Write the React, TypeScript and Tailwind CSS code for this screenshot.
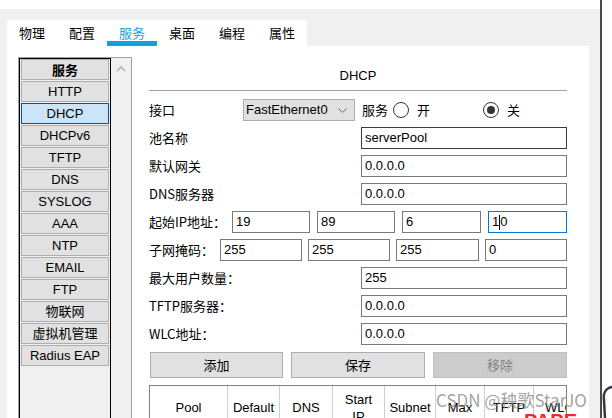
import React from "react";

const sans = "font-['Liberation_Sans','Noto_Sans_CJK_SC',sans-serif]";
const cjk = "font-['Noto_Sans_CJK_SC','Liberation_Sans',sans-serif]";

const tabs = ["物理", "配置", "服务", "桌面", "编程", "属性"];

const services = [
  "HTTP",
  "DHCP",
  "DHCPv6",
  "TFTP",
  "DNS",
  "SYSLOG",
  "AAA",
  "NTP",
  "EMAIL",
  "FTP",
  "物联网",
  "虚拟机管理",
  "Radius EAP",
];

const columns = [
  { w: "w-[78px]", lines: ["Pool", "Name"] },
  { w: "w-[52px]", lines: ["Default", "Gateway"] },
  { w: "w-[53px]", lines: ["DNS", "Server"] },
  { w: "w-[52px]", lines: ["Start", "IP", "Address"] },
  { w: "w-[51px]", lines: ["Subnet", "Mask"] },
  { w: "w-[49px]", lines: ["Max", "User"] },
  { w: "w-[49px]", lines: ["TFTP", "Server"] },
  { w: "w-[52px]", lines: ["WLC", "Address"] },
];

const Input = ({ value, w, dark }: { value: string; w: string; dark?: boolean }) => (
  <div
    className={`${w} h-[22px] shrink-0 border ${dark ? "border-[#3c3c3c]" : "border-[#7a7a7a]"} bg-white px-[3px] text-[13px] leading-[20px] text-black ${sans}`}
  >
    {value}
  </div>
);

const Row = ({ label, labelW, children }: { label: string; labelW: string; children: React.ReactNode }) => (
  <div className="mt-[6px] flex h-[22px] items-center">
    <div className={`${labelW} shrink-0 text-[13px] leading-[22px] text-black ${cjk}`}>{label}</div>
    {children}
  </div>
);

const Radio = ({ on }: { on?: boolean }) => (
  <div className="flex h-[16px] w-[16px] items-center justify-center rounded-full border border-[#333333] bg-white">
    {on && <div className="h-[8px] w-[8px] rounded-full bg-[#333333]" />}
  </div>
);

export default function App() {
  return (
    <div className="relative flex h-[418px] w-[612px] overflow-hidden bg-white">
      <div className="flex h-full w-[600px] shrink-0 flex-col">
        <div className="h-[9px] shrink-0 bg-white" />
        <div className="shrink-0 bg-[#f0f0f0] pl-[7px] pr-[11px] pt-[11px]">
          {/* tab strip */}
          <div className="flex h-[26px] w-[300px] bg-white">
            {tabs.map((t, i) => (
              <div
                key={t}
                className={`flex w-[50px] items-center justify-center text-[13px] ${cjk} ${
                  i === 2 ? "text-[#1a9ed8] shadow-[inset_0_-5px_0_#12a0da]" : "text-black"
                }`}
              >
                {t}
              </div>
            ))}
          </div>

          {/* panel */}
          <div className="flex h-[400px] items-start bg-white">
            {/* service list */}
            <div className="ml-[11px] mt-[11px] flex h-[370px] w-[114px] border border-[#a0a0a0] bg-[#f0f0f0]">
              <div className="flex h-full w-[92px] flex-col gap-[1px] border border-black px-[1px]">
                <div className={`flex h-[21px] items-center justify-center border border-[#adadad] bg-[#e1e1e1] text-[13px] font-bold text-black ${cjk}`}>
                  服务
                </div>
                {services.map((s) => (
                  <div
                    key={s}
                    className={`flex h-[21px] items-center justify-center border text-[13px] leading-[19px] text-black ${sans} ${
                      s === "DHCP" ? "border-[#005499] bg-[#cce4f7]" : "border-[#adadad] bg-[#e1e1e1]"
                    }`}
                  >
                    {s}
                  </div>
                ))}
              </div>
              <div className="flex-1 pl-[5px] pt-[8px]">
                <svg width="10" height="6" viewBox="0 0 10 6">
                  <polyline points="1,5 5,1 9,5" fill="none" stroke="#b4b4b4" strokeWidth="1.6" />
                </svg>
              </div>
            </div>

            {/* DHCP form */}
            <div className="ml-[17px] flex w-[418px] flex-col">
              <div className={`flex h-[45px] items-end justify-center border-b border-[#a0a0a0] pb-[6px] text-[13px] leading-[16px] text-black ${sans}`}>
                DHCP
              </div>

              <div className="mt-[8px] flex h-[22px] items-center">
                <div className={`w-[94px] shrink-0 text-[13px] leading-[22px] text-black ${cjk}`}>接口</div>
                <div className={`flex h-[22px] w-[112px] shrink-0 items-center justify-between border border-[#adadad] bg-[#e1e1e1] pl-[2px] pr-[7px] text-[13px] text-black ${sans}`}>
                  <span>FastEthernet0</span>
                  <svg width="9" height="5" viewBox="0 0 9 5">
                    <polyline points="0.5,0.5 4.5,4.5 8.5,0.5" fill="none" stroke="#6a6a6a" strokeWidth="1" />
                  </svg>
                </div>
                <span className={`ml-[7px] text-[13px] text-black ${cjk}`}>服务</span>
                <div className="ml-[5px]">
                  <Radio />
                </div>
                <span className={`ml-[8px] text-[13px] text-black ${cjk}`}>开</span>
                <div className="ml-[53px]">
                  <Radio on />
                </div>
                <span className={`ml-[8px] text-[13px] text-black ${cjk}`}>关</span>
              </div>

              <Row label="池名称" labelW="w-[212px]">
                <Input value="serverPool" w="w-[206px]" dark />
              </Row>
              <Row label="默认网关" labelW="w-[212px]">
                <Input value="0.0.0.0" w="w-[206px]" />
              </Row>
              <Row label="DNS服务器" labelW="w-[212px]">
                <Input value="0.0.0.0" w="w-[206px]" />
              </Row>
              <Row label="起始IP地址：" labelW="w-[83px]">
                <div className="flex gap-[7px]">
                  <Input value="19" w="w-[78px]" />
                  <Input value="89" w="w-[78px]" />
                  <Input value="6" w="w-[79px]" />
                  <div className={`flex h-[22px] w-[79px] items-center border border-[#0078d7] bg-white px-[3px] text-[13px] leading-[20px] text-black ${sans}`}>
                    <span>1</span>
                    <span className="h-[15px] w-[1px] bg-black" />
                    <span>0</span>
                  </div>
                </div>
              </Row>
              <Row label="子网掩码：" labelW="w-[71px]">
                <div className="flex gap-[6px]">
                  <Input value="255" w="w-[82px]" />
                  <Input value="255" w="w-[82px]" />
                  <Input value="255" w="w-[83px]" />
                  <Input value="0" w="w-[82px]" />
                </div>
              </Row>
              <Row label="最大用户数量：" labelW="w-[212px]">
                <Input value="255" w="w-[206px]" />
              </Row>
              <Row label="TFTP服务器：" labelW="w-[212px]">
                <Input value="0.0.0.0" w="w-[206px]" />
              </Row>
              <Row label="WLC地址：" labelW="w-[212px]">
                <Input value="0.0.0.0" w="w-[206px]" />
              </Row>

              <div className={`mt-[7px] flex h-[26px] gap-[8px] pl-[1px] text-[13px] ${cjk}`}>
                <div className="flex w-[133px] items-center justify-center border border-[#adadad] bg-[#e1e1e1] text-black">添加</div>
                <div className="flex w-[134px] items-center justify-center border border-[#adadad] bg-[#e1e1e1] text-black">保存</div>
                <div className="flex w-[134px] items-center justify-center border border-[#bfbfbf] bg-[#cccccc] text-[#838383]">移除</div>
              </div>

              <div className="mt-[7px] flex h-[80px] overflow-hidden border border-[#828282] bg-white">
                {columns.map((c, i) => (
                  <div
                    key={i}
                    className={`${c.w} flex h-[60px] shrink-0 flex-col items-center justify-center overflow-hidden border-r border-[#d0d0d0] text-[13px] leading-[17px] text-black ${sans}`}
                  >
                    {c.lines.map((l) => (
                      <span key={l} className="whitespace-nowrap">
                        {l}
                      </span>
                    ))}
                  </div>
                ))}
              </div>
            </div>
          </div>
        </div>
      </div>
      <div className="h-full w-[2px] shrink-0 bg-[#4a4a4a]" />
      <div className="flex-1 bg-white" />

      {/* overlays from the captured screen */}
      <div className={`absolute left-[436px] top-[387px] whitespace-nowrap text-[17px] text-[#8a8a8a]/80 ${cjk}`}>
        CSDN @秧歌StarJO
      </div>
      <div className="absolute left-[524px] top-[411px] text-[20px] font-bold leading-[20px] text-[#e0302a] font-['Liberation_Sans',sans-serif]">
        PAPE
      </div>
      <svg className="absolute left-[600px] top-[384px]" width="12" height="34" viewBox="0 0 12 34">
        <path d="M12 3 C6 4 3 9 4 16 L5 34" fill="none" stroke="#333a45" strokeWidth="2.5" />
      </svg>
    </div>
  );
}
